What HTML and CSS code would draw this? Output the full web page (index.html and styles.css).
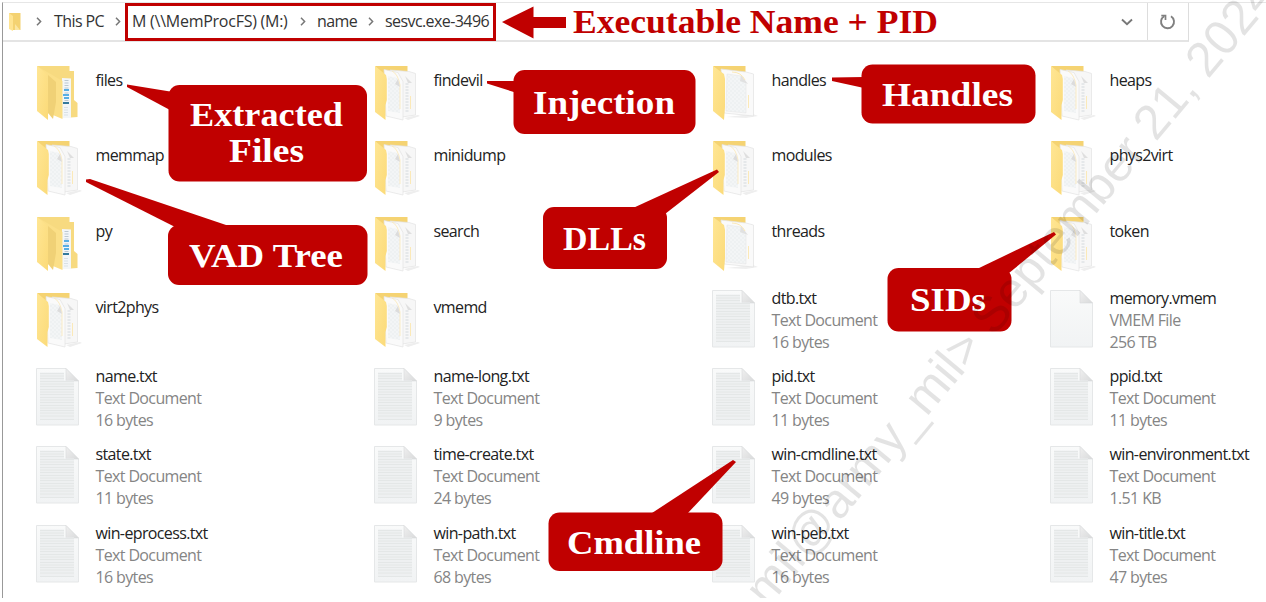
FILE: index.html
```html
<!DOCTYPE html>
<html lang="en">
<head>
<meta charset="utf-8">
<title>sesvc.exe-3496</title>
<link rel="stylesheet" href="styles.css">
</head>
<body>
<svg class="defs" aria-hidden="true">
  <defs>
    <linearGradient id="flap" x1="0" y1="0" x2="1" y2="1"><stop offset="0" stop-color="#ffe694"/><stop offset="1" stop-color="#fbda78"/></linearGradient>
    <linearGradient id="paper" x1="0" y1="0" x2="0" y2="1"><stop offset="0" stop-color="#f9fafa"/><stop offset="1" stop-color="#f1f3f4"/></linearGradient>
    <linearGradient id="corner" x1="0" y1="0" x2="1" y2="1"><stop offset="0" stop-color="#f0f0f0"/><stop offset="1" stop-color="#d9dadb"/></linearGradient>
    <pattern id="dots" width="4" height="4" patternUnits="userSpaceOnUse"><rect width="4" height="4" fill="#f3f5f6"/><path d="M0 1h2M2 3h2" stroke="#eaedef"/></pattern>
    <symbol id="folder-docs" viewBox="0 0 46 58">
      <path d="M30 54l14-3 2 1-12 4z" fill="#eeeeee"/>
      <path d="M1 2h32.500v12H10z" fill="#f5d372"/>
      <path d="M16 6l19 1.500 6.500 2V51L28 53z" fill="#f7f7f7" stroke="#e3e3e3" stroke-width=".7"/>
      <path d="M33 19v29" stroke="#e5e8ea" stroke-width="3" stroke-dasharray="2 1"/><path d="M36.500 32v13" stroke="#fbe9b8"/>
      <path d="M31 12l3 7h4z" fill="#dfdfdf"/>
      <path d="M10 5.500l14 3 5 9V56L12 52z" fill="#fafafa" stroke="#e3e3e3" stroke-width=".7"/>
      <path d="M14 12l9 2 3 7v28l-12-2z" fill="url(#dots)"/>
      <path d="M18 7q6 3 8 14v24" fill="none" stroke="#fbe9b8" stroke-width=".8"/>
      <path d="M24 15l-3 5 5 3z" fill="#dcdcdc"/>
      <path d="M1 2l11 9 .8 4v21L11.500 41v15L1 48z" fill="url(#flap)"/>
    </symbol>
    <symbol id="folder-one" viewBox="0 0 46 58">
      <path d="M14 53l27-3 5 2-12 2z" fill="#efefef"/>
      <path d="M1 2h32.500v12H10z" fill="#f5d372"/>
      <path d="M9 5l25 3 7.500 2V52L12 49z" fill="#fafafa" stroke="#e3e3e3" stroke-width=".7"/>
      <path d="M15 10l14 2 5 8v29l-20-2z" fill="url(#dots)" stroke="#e8e8e8" stroke-width=".6"/>
      <path d="M29 11l-1 6 8 3z" fill="#e1e1e1"/><path d="M20 8q9 0 13 8M36.500 31v13" fill="none" stroke="#fbe9b8"/>
      <path d="M1 2l11 8 1 5v28l-1 13L1 47z" fill="url(#flap)"/>
    </symbol>
    <symbol id="folder-full" viewBox="0 0 46 58">
      <path d="M1 2h32.500v5H38v29l3.500 3v14L28 54z" fill="#f7da80"/>
      <path d="M26 14l9 .5V54l-9 0z" fill="#f3f6f8"/>
      <path d="M30.500 16v22" stroke="#bcc8d1" stroke-width="4" stroke-dasharray="1 1.500"/>
      <path d="M28 26h5M27 31h6M28 34h5" stroke="#58aee5" stroke-width="2"/><path d="M27 39h6" stroke="#347a9d" stroke-width="2"/>
      <path d="M30 43v9" stroke="#d9e1e6" stroke-width="4" stroke-dasharray="1 1.500"/>
      <path d="M1 2l25.500 15v38L12 49z" fill="#fbdf87"/>
      <path d="M12 11l8 7v20l-3 17-5-6z" fill="#f0d176"/>
      <path d="M1 2l10 8 1 28v18L1 47z" fill="url(#flap)"/>
    </symbol>
    <symbol id="file" viewBox="0 0 46 58">
      <path d="M.5.500H30L42.500 13v44H.500z" fill="url(#paper)" stroke="#e5e7e8"/>
      <path d="M30 .500V13h12.500z" fill="url(#corner)" stroke="#d8dadb" stroke-width=".6"/>
    </symbol>
    <symbol id="text-file" viewBox="0 0 46 58">
      <use href="#file"/>
      <path d="M4 4.500h24v8h10V52H4z" fill="#eef0f1"/>
      <path d="M4 5.500h24M4 8h24M4 10.500h24M4 13.500h34M4 16h34M4 18.500h34M4 21.500h34M4 24h34M4 26.500h34M4 29.500h34M4 32h34M4 34.500h34M4 37.500h34M4 40h34M4 42.500h34M4 45h34M4 48h34M4 51.500h34" stroke="#e1e4e5" stroke-width=".8"/>
    </symbol>
    <symbol id="chev" viewBox="0 0 6 9"><path d="M1 .8l3.600 3.700L1 8.200" fill="none" stroke="#777" stroke-width="1.500"/></symbol>
  </defs>
</svg>

<main class="window">
  <header class="address">
    <div class="path">
      <svg class="mini" viewBox="0 0 14 20"><path d="M1 1h11.500v17H5z" fill="#f4d271"/><path d="M1 1l4 3v15l-4-2z" fill="#ffe491"/><path d="M7 12v6h5" fill="#fbe6a2"/></svg>
      <svg class="chev c1"><use href="#chev"/></svg>
      <span class="crumb pc">This PC</span>
      <svg class="chev c2"><use href="#chev"/></svg>
      <div class="marked">
        <span class="crumb drive">M (\\MemProcFS) (M:)</span>
        <svg class="chev"><use href="#chev"/></svg>
        <span class="crumb name">name</span>
        <svg class="chev"><use href="#chev"/></svg>
        <span class="crumb proc">sesvc.exe-3496</span>
      </div>
    </div>
    <svg class="down" viewBox="0 0 12 8"><path d="M1 1.500l5 4.700 5-4.700" fill="none" stroke="#777" stroke-width="1.900"/></svg>
    <div class="reload"><svg viewBox="0 0 18 18"><path d="M5.200 3.200A6.500 6.500 0 1 0 12 3.300" fill="none" stroke="#808080" stroke-width="1.900"/><path d="M2.300 2.600h4.200v4.500" fill="none" stroke="#808080" stroke-width="1.700"/></svg></div>
  </header>

  <section class="items">
    <article class="item"><svg><use href="#folder-full"/></svg><div><b>files</b></div></article>
    <article class="item"><svg><use href="#folder-docs"/></svg><div><b>findevil</b></div></article>
    <article class="item"><svg><use href="#folder-one"/></svg><div><b>handles</b></div></article>
    <article class="item"><svg><use href="#folder-docs"/></svg><div><b>heaps</b></div></article>

    <article class="item"><svg><use href="#folder-docs"/></svg><div><b>memmap</b></div></article>
    <article class="item"><svg><use href="#folder-docs"/></svg><div><b>minidump</b></div></article>
    <article class="item"><svg><use href="#folder-docs"/></svg><div><b>modules</b></div></article>
    <article class="item"><svg><use href="#folder-docs"/></svg><div><b>phys2virt</b></div></article>

    <article class="item"><svg><use href="#folder-full"/></svg><div><b>py</b></div></article>
    <article class="item"><svg><use href="#folder-docs"/></svg><div><b>search</b></div></article>
    <article class="item"><svg><use href="#folder-one"/></svg><div><b>threads</b></div></article>
    <article class="item"><svg><use href="#folder-docs"/></svg><div><b>token</b></div></article>

    <article class="item"><svg><use href="#folder-docs"/></svg><div><b>virt2phys</b></div></article>
    <article class="item"><svg><use href="#folder-docs"/></svg><div><b>vmemd</b></div></article>
    <article class="item doc"><svg><use href="#text-file"/></svg><div><b>dtb.txt</b><span>Text Document</span><span>16 bytes</span></div></article>
    <article class="item doc"><svg><use href="#file"/></svg><div><b>memory.vmem</b><span>VMEM File</span><span>256 TB</span></div></article>

    <article class="item doc"><svg><use href="#text-file"/></svg><div><b>name.txt</b><span>Text Document</span><span>16 bytes</span></div></article>
    <article class="item doc"><svg><use href="#text-file"/></svg><div><b>name-long.txt</b><span>Text Document</span><span>9 bytes</span></div></article>
    <article class="item doc"><svg><use href="#text-file"/></svg><div><b>pid.txt</b><span>Text Document</span><span>11 bytes</span></div></article>
    <article class="item doc"><svg><use href="#text-file"/></svg><div><b>ppid.txt</b><span>Text Document</span><span>11 bytes</span></div></article>

    <article class="item doc"><svg><use href="#text-file"/></svg><div><b>state.txt</b><span>Text Document</span><span>11 bytes</span></div></article>
    <article class="item doc"><svg><use href="#text-file"/></svg><div><b>time-create.txt</b><span>Text Document</span><span>24 bytes</span></div></article>
    <article class="item doc"><svg><use href="#text-file"/></svg><div><b>win-cmdline.txt</b><span>Text Document</span><span>49 bytes</span></div></article>
    <article class="item doc"><svg><use href="#text-file"/></svg><div><b>win-environment.txt</b><span>Text Document</span><span>1.51 KB</span></div></article>

    <article class="item doc"><svg><use href="#text-file"/></svg><div><b>win-eprocess.txt</b><span>Text Document</span><span>16 bytes</span></div></article>
    <article class="item doc"><svg><use href="#text-file"/></svg><div><b>win-path.txt</b><span>Text Document</span><span>68 bytes</span></div></article>
    <article class="item doc"><svg><use href="#text-file"/></svg><div><b>win-peb.txt</b><span>Text Document</span><span>16 bytes</span></div></article>
    <article class="item doc"><svg><use href="#text-file"/></svg><div><b>win-title.txt</b><span>Text Document</span><span>47 bytes</span></div></article>
  </section>
</main>

<svg class="notes" viewBox="0 0 1266 598">
  <g class="red">
    <path d="M502 22L533.500 6.500V17H566V28H533.500V38.500z"/>
    <rect x="168.500" y="85" width="198.500" height="96.500" rx="11"/><path d="M127 84.500L170 91.500V110L127 87z"/>
    <rect x="168" y="225" width="199.500" height="60" rx="11"/><path d="M86 179.500L90 179L229 226 185 232 86 182z"/>
    <rect x="513.500" y="70" width="182" height="64" rx="11"/><path d="M487 81L517 81V93L487 83.500z"/>
    <rect x="861.500" y="64.500" width="174" height="59" rx="11"/><path d="M832 77.500L864 77V88L832 81z"/>
    <rect x="543" y="207" width="124" height="62" rx="11"/><path d="M633 208L717 169.500 719 172 665 214 640 220z"/>
    <rect x="887.500" y="268" width="124" height="63.500" rx="11"/><path d="M977 269L1054 232 1056 234.500 1009 273 985 280z"/>
    <rect x="548.500" y="512.500" width="174" height="58.500" rx="11"/><path d="M652 513L733 460 736 462 687 514z"/>
    <text x="573" y="33" textLength="365" lengthAdjust="spacingAndGlyphs">Executable Name + PID</text>
  </g>
  <g class="label">
    <text x="190" y="126" textLength="153" lengthAdjust="spacingAndGlyphs">Extracted</text>
    <text x="229" y="162" textLength="75" lengthAdjust="spacingAndGlyphs">Files</text>
    <text x="189" y="267" textLength="154" lengthAdjust="spacingAndGlyphs">VAD Tree</text>
    <text x="533" y="114" textLength="142" lengthAdjust="spacingAndGlyphs">Injection</text>
    <text x="882" y="106" textLength="131" lengthAdjust="spacingAndGlyphs">Handles</text>
    <text x="563" y="250" textLength="83" lengthAdjust="spacingAndGlyphs">DLLs</text>
    <text x="910" y="311" textLength="76" lengthAdjust="spacingAndGlyphs">SIDs</text>
    <text x="567" y="554" textLength="134" lengthAdjust="spacingAndGlyphs">Cmdline</text>
  </g>
  <text class="watermark" transform="translate(767.500 608.500) rotate(-50.200)">mil@army_mil&gt; September 21, 2024</text>
</svg>
</body>
</html>
```
FILE: styles.css
```css
* { box-sizing: border-box; }
body {
  margin: 0;
  height: 602px;
  overflow: hidden;
  background: #fff;
  color: #222;
  font: 16px/22px "Open Sans", "Noto Sans", sans-serif;
  letter-spacing: -0.63px;
}
.defs { position: absolute; width: 0; height: 0; }
.window {
  height: 596px;
  margin: 2px 0 0 2px;
  border-left: 1px solid #999;
  border-top: 1px solid #e6e6e6;
}
.address {
  display: flex;
  align-items: center;
  width: 1186px;
  height: 39px;
  border-bottom: 2px solid #e4e4e4;
  border-right: 1px solid #ddd;
}
.path { display: flex; align-items: center; flex: 1; }
.mini { width: 14px; height: 20px; margin-left: 5px; }
.chev { width: 6px; height: 9px; flex: none; }
.c1 { margin: 0 12px 0 14px; }
.c2 { margin-right: 4px; }
.crumb { flex: none; white-space: nowrap; color: #333; letter-spacing: -0.58px; margin-top: -2px; }
.pc { width: 61px; }
.marked {
  display: flex;
  align-items: center;
  width: 371px;
  height: 38px;
  padding-left: 4px;
  border: 3px solid #c00000;
}
.drive { width: 168px; letter-spacing: -0.25px; }
.name { width: 51px; margin-left: 11px; }
.proc { margin-left: 11px; }
.down { width: 12px; height: 8px; margin-right: 14px; }
.reload {
  display: grid;
  place-items: center;
  width: 41px;
  height: 37px;
  border-left: 1px solid #ddd;
}
.reload svg { width: 18px; height: 18px; }
.items {
  display: grid;
  grid-template-columns: repeat(3, 338px) 1fr;
  grid-template-rows: repeat(3, 75.6px) 77px repeat(3, 78.3px);
  padding: 13px 0 0 33px;
}
.item { display: flex; align-items: center; gap: 13.5px; }
.item svg { width: 46px; height: 58px; flex: none; }
.item div { display: flex; flex-direction: column; height: 48px; }
.item b { font-weight: 400; }
.doc svg { margin-top: -2px; }
.doc div { height: 66px; }
.doc span { color: #858585; }
.notes {
  position: absolute;
  left: 0;
  top: 0;
  width: 1266px;
  height: 598px;
}
.red { fill: #c00000; }
.red text, .label text { font: bold 33px "Liberation Serif", serif; letter-spacing: 0; }
.label { fill: #fff; }
.watermark {
  font: 49px "Liberation Sans", Arial, sans-serif;
  letter-spacing: 0;
  fill: #000;
  fill-opacity: 0.11;
}
```
